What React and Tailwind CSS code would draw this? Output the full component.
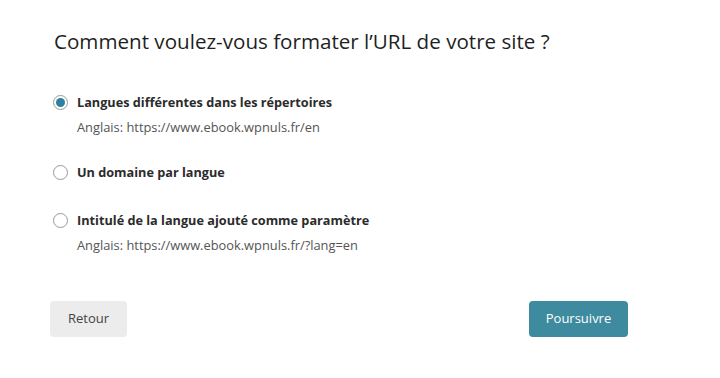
function Radio({ checked }) {
  return (
    <span className="flex h-[15px] w-[15px] shrink-0 items-center justify-center rounded-full border border-[#9a9a9a] bg-white">
      {checked && <span className="h-[9px] w-[9px] rounded-full bg-[#2f7fa3]" />}
    </span>
  );
}

function Option({ checked, label, hint, className }) {
  return (
    <div className={className}>
      <div className="flex items-center gap-[9px]">
        <Radio checked={checked} />
        <span className="text-[12.7px] font-bold text-[#2b2b2b]">{label}</span>
      </div>
      {hint && (
        <p className="mt-[6px] pl-[24px] text-[12.85px] text-[#555]">{hint}</p>
      )}
    </div>
  );
}

export default function App() {
  return (
    <div
      className="h-[378px] w-[720px] bg-white pl-[54px] pr-[92px] pt-[26px]"
      style={{ fontFamily: '"Open Sans", "Noto Sans", sans-serif' }}
    >
      <h1 className="text-[20.6px] font-normal text-[#1f1f1f]">
        Comment voulez-vous formater l’URL de votre site ?
      </h1>

      <div className="mt-[36px] ml-[-1px] flex flex-col">
        <Option
          checked
          label="Langues différentes dans les répertoires"
          hint="Anglais: https://www.ebook.wpnuls.fr/en"
        />
        <Option className="mt-[26px]" label="Un domaine par langue" />
        <Option
          className="mt-[29px]"
          label="Intitulé de la langue ajouté comme paramètre"
          hint="Anglais: https://www.ebook.wpnuls.fr/?lang=en"
        />
      </div>

      <div className="mt-[45px] ml-[-4px] flex items-center justify-between">
        <button className="h-[36px] w-[77px] rounded-[4px] bg-[#ececec] text-[13px] text-[#444]">
          Retour
        </button>
        <button className="h-[36px] w-[99px] rounded-[4px] bg-[#3e8a9e] text-[13px] text-white">
          Poursuivre
        </button>
      </div>
    </div>
  );
}
